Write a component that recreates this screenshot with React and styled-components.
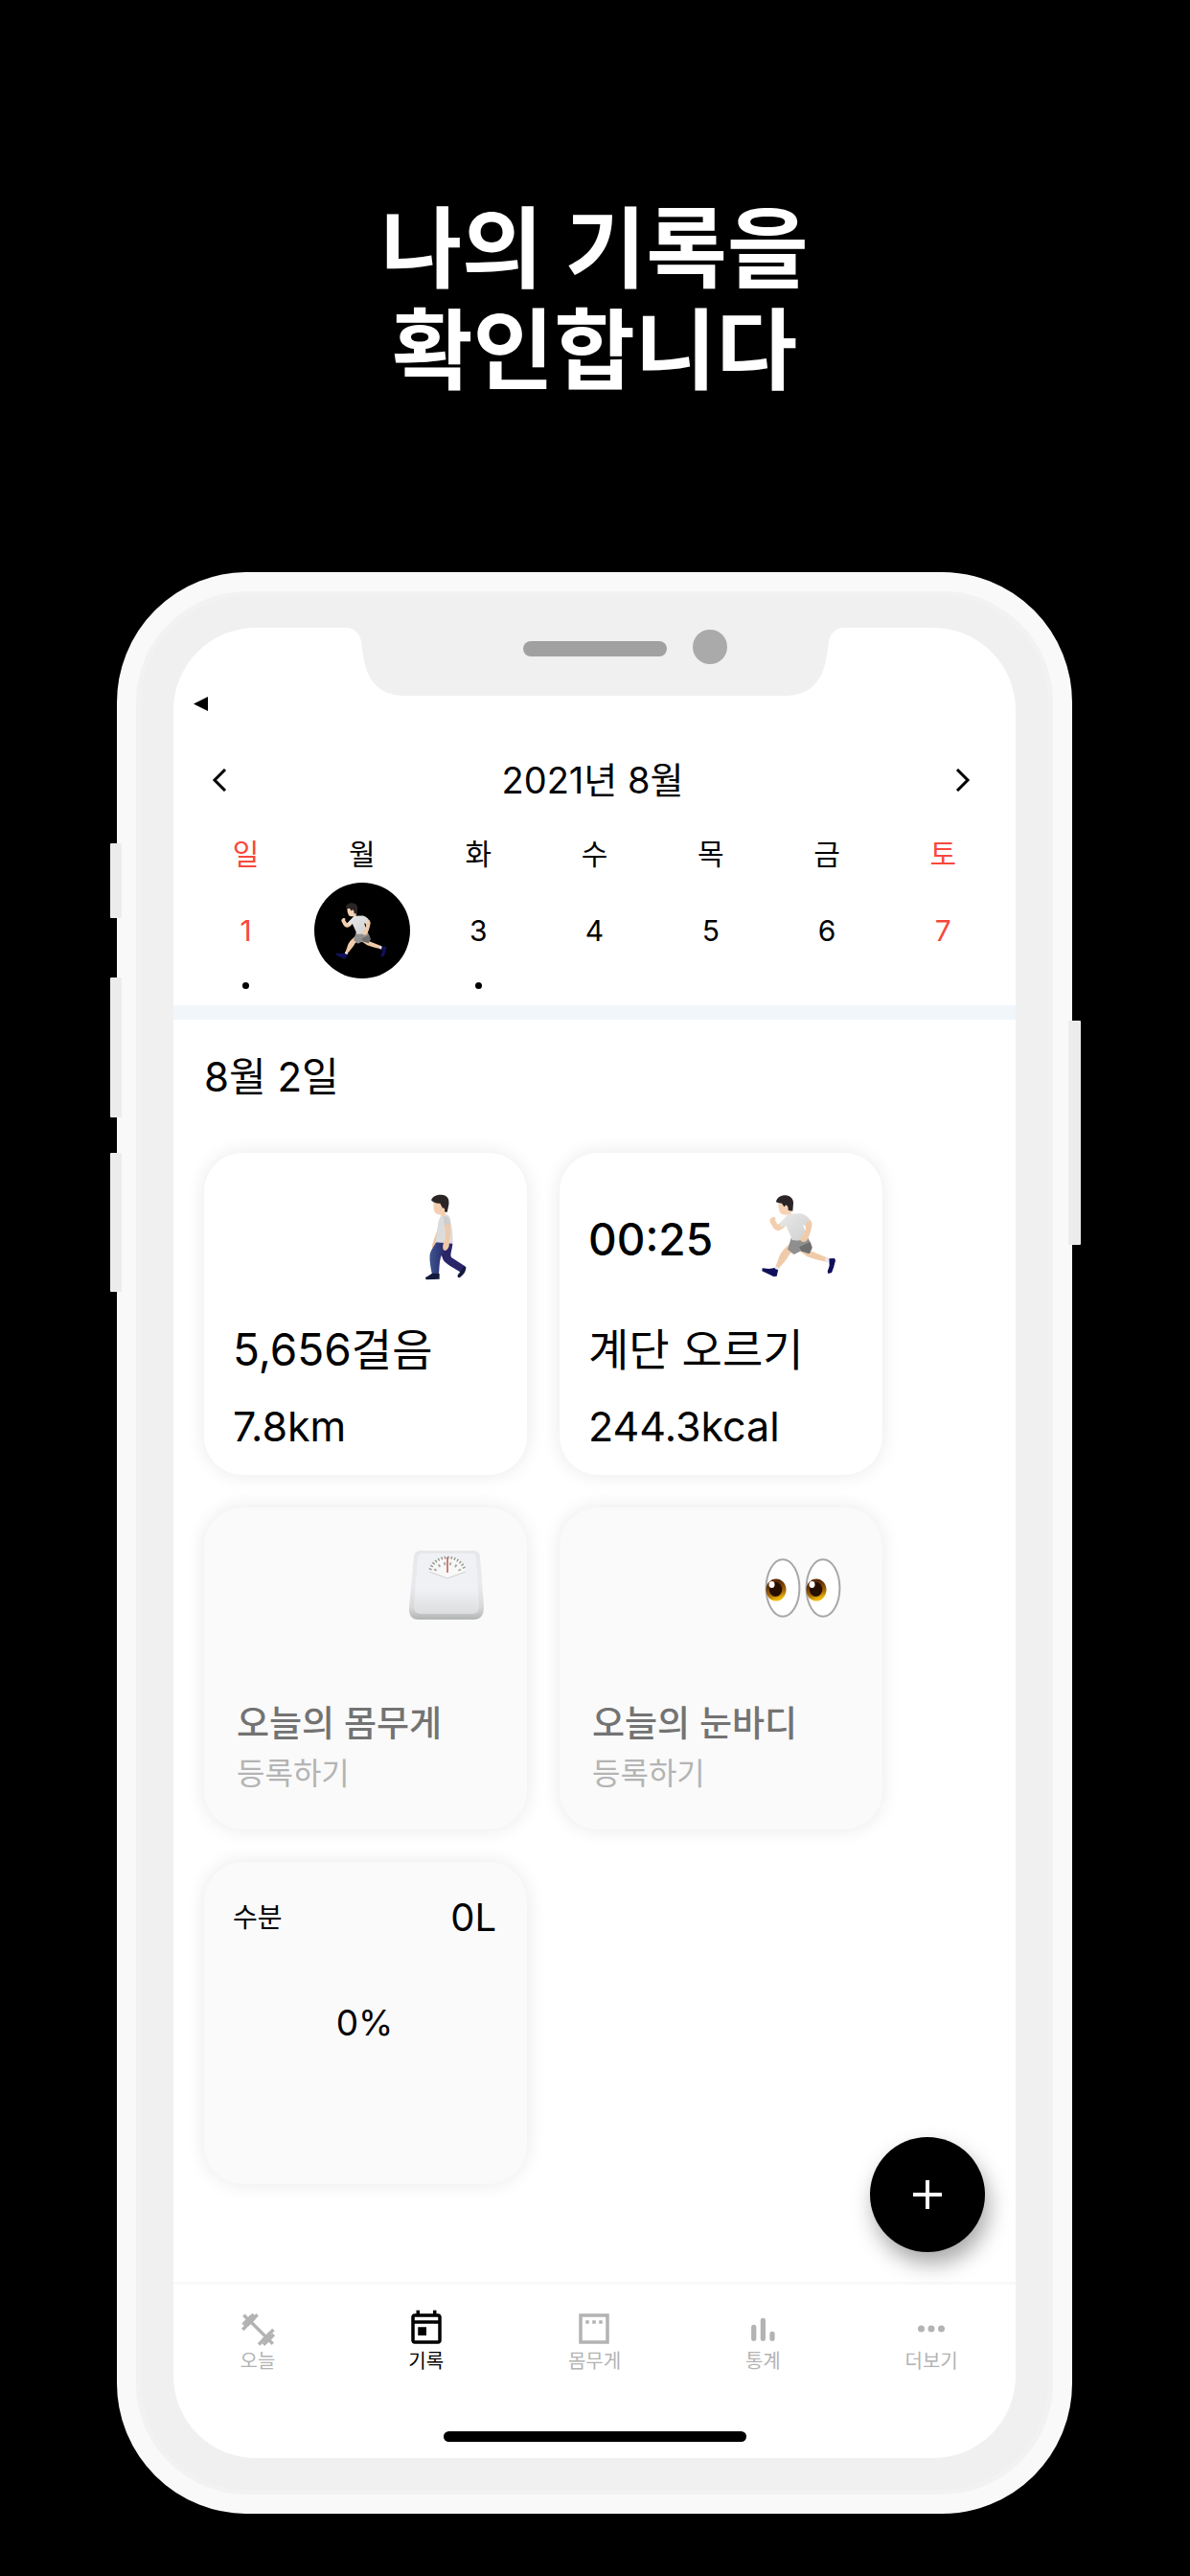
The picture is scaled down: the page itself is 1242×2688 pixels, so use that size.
import React from "react";
import styled, { createGlobalStyle, css } from "styled-components";

const GlobalStyle = createGlobalStyle`
  *, *::before, *::after { box-sizing: border-box; }
  body {
    margin: 0;
    background: #000;
    color: #000;
    font-family: Inter, "Noto Sans CJK KR", sans-serif;
    font-weight: 400;
  }
  h1, h2, p { margin: 0; font-weight: inherit; }
  button { font-family: inherit; font-weight: inherit; color: inherit; border: 0; padding: 0; cursor: pointer; }
  svg { display: block; }
`;

const Page = styled.div`
  min-height: 100vh;
  padding: 209px 123px 65px 122px;
  background: #000;
`;

const Headline = styled.h1`
  margin-bottom: 176px;
  color: #fff;
  font-family: Roboto, "Noto Sans CJK KR", sans-serif;
  font-size: 92px;
  font-weight: 700;
  line-height: 106px;
  text-align: center;
`;

const Phone = styled.div`
  position: relative;
  padding: 38px 39px;
  border: 20px solid #f9f9f9;
  border-radius: 136px;
  background: #f0f0f0;
  box-shadow: inset 0 0 0 5px #f2f2f2;
`;

const SideButton = styled.span`
  position: absolute;
  ${(p) => (p.$side === "left" ? "left: -27px;" : "right: -29px;")}
  top: ${(p) => p.$top}px;
  width: ${(p) => (p.$side === "left" ? 12 : 13)}px;
  height: ${(p) => p.$length}px;
  border-radius: 1px;
  background: #ececec;
`;

const Screen = styled.div`
  position: relative;
  overflow: hidden;
  border-radius: 86px;
  background: #fff;
`;

const Notch = styled.div`
  position: absolute;
  top: 0;
  left: 50%;
  width: 520px;
  transform: translateX(-50%);
`;

const StatusBar = styled.div`
  padding: 72px 21px 0;
`;

const MonthBar = styled.div`
  display: flex;
  align-items: center;
  justify-content: space-between;
  height: 72px;
  margin-top: 36px;
  padding: 0 28px 0 24px;
`;

const MonthTitle = styled.h2`
  font-size: 38px;
  line-height: 48px;
`;

const ArrowButton = styled.button`
  display: flex;
  align-items: center;
  justify-content: center;
  width: 48px;
  height: 48px;
  background: none;
`;

const WeekWrap = styled.div`
  padding: 21px 15px 17px;
  border-bottom: 15px solid #f1f6fb;
`;

const Week = styled.table`
  width: 100%;
  table-layout: fixed;
  border-collapse: collapse;
  text-align: center;
`;

const Weekday = styled.th`
  height: 40px;
  padding: 0;
  color: ${(p) => (p.$holiday ? "#f8483c" : "#000")};
  font-size: 30px;
  font-weight: inherit;
  line-height: 40px;
`;

const DayCell = styled.td`
  padding: 10px 0 0;
`;

const Day = styled.button`
  display: flex;
  align-items: center;
  justify-content: center;
  width: 100px;
  height: 100px;
  margin: 0 auto;
  border-radius: 50%;
  background: ${(p) => (p.$selected ? "#000" : "transparent")};
  color: ${(p) => (p.$holiday ? "#f8483c" : "#000")};
  font-size: 30px;
  line-height: 40px;
`;

const Dot = styled.span`
  display: block;
  width: 7px;
  height: 7px;
  margin: 4px auto 0;
  border-radius: 50%;
  background: ${(p) => (p.$on ? "#000" : "transparent")};
`;

const Records = styled.main`
  position: relative;
  padding: 30px 32px 102px;
`;

const DateTitle = styled.h2`
  margin-bottom: 49px;
  font-size: 42px;
  line-height: 60px;
`;

const CardGrid = styled.div`
  display: grid;
  grid-template-columns: repeat(auto-fill, 337px);
  grid-auto-rows: 336px;
  gap: 34px;
`;

const cardBase = css`
  border-radius: 40px;
  box-shadow: 0 0 20px rgba(0, 0, 0, 0.09);
`;

const ActivityCard = styled.article`
  ${cardBase}
  display: flex;
  flex-direction: column;
  padding: 38px 0 21px 30px;
  background: #fff;
`;

const CardTop = styled.div`
  display: flex;
  align-items: center;
  height: 104px;
  margin-bottom: auto;
  padding-right: 38px;
`;

const Emoji = styled.span`
  align-self: flex-start;
  width: ${(p) => p.$size}px;
  height: ${(p) => p.$size}px;
  margin-left: auto;
`;

const Timer = styled.span`
  font-size: 46px;
  font-weight: 500;
  line-height: 60px;
`;

const ActivityName = styled.p`
  margin-bottom: 20px;
  font-size: 46px;
  line-height: 60px;
`;

const ActivityValue = styled.p`
  font-size: 43px;
  line-height: 60px;
`;

const RegisterCard = styled.button`
  ${cardBase}
  display: flex;
  flex-direction: column;
  align-items: stretch;
  && { padding: 38px 0 32px 34px; }
  background: #fafafa;
  text-align: left;
`;

const RegisterTitle = styled.span`
  color: #737373;
  font-size: 37px;
  font-weight: 500;
  line-height: 52px;
`;

const RegisterHint = styled.span`
  color: #b4b4b4;
  font-size: 32px;
  line-height: 52px;
`;

const WaterCard = styled.article`
  ${cardBase}
  display: grid;
  grid-template-rows: 1fr 60px 1fr;
  padding: 34px 32px 34px 30px;
  background: #fafafa;
`;

const WaterHead = styled.div`
  display: flex;
  align-items: center;
  justify-content: space-between;
  height: 48px;
`;

const WaterLabel = styled.span`
  font-size: 28px;
  line-height: 48px;
`;

const WaterAmount = styled.span`
  font-size: 40px;
  line-height: 48px;
`;

const WaterPercent = styled.p`
  font-size: 37px;
  line-height: 60px;
  text-align: center;
`;

const AddButton = styled.button`
  position: absolute;
  right: 32px;
  bottom: 31px;
  display: flex;
  align-items: center;
  justify-content: center;
  width: 120px;
  height: 120px;
  border-radius: 50%;
  background: #000;
  box-shadow: 4px 12px 22px rgba(0, 0, 0, 0.34);
`;

const TabBar = styled.nav`
  display: grid;
  grid-template-columns: repeat(5, 1fr);
  padding-top: 25px;
  border-top: 3px solid #f9f9f9;
`;

const Tab = styled.a`
  display: flex;
  flex-direction: column;
  align-items: center;
  color: ${(p) => (p.$active ? "#000" : "#b3b3b3")};
  font-size: 20px;
  line-height: 26px;
  text-decoration: none;
`;

const HomeIndicator = styled.div`
  width: 316px;
  height: 11px;
  margin: 60px auto 17px;
  border-radius: 6px;
  background: #000;
`;

function RunnerIcon({ size }) {
  return (
    <svg width={size} height={size} viewBox="681 243 288 288" aria-hidden="true">
      <defs>
        <linearGradient id="runShirt" x1="0" x2="1" y1="0" y2="1">
          <stop offset="0" stopColor="#e9e9e9" />
          <stop offset="1" stopColor="#cfcfcf" />
        </linearGradient>
      </defs>
      <path d="M796 410 C777 428 762 440 757 462 L748 486 L758 491 C771 476 786 460 792 446 L816 430Z" fill="#f0cba9" />
      <path d="M838 422 L858 436 L913 458 L908 470 C884 467 864 460 848 454 L822 436Z" fill="#f0cba9" />
      <path d="M707 490 L728 492 L750 488 L757 493 L752 515 L742 516 L706 499Z" fill="#10105a" />
      <path d="M748 484 L761 489 L757 496 L746 492Z" fill="#e8e8ee" />
      <path d="M905 457 L916 460 L912 474 L903 467Z" fill="#e8e8ee" />
      <path d="M916 460 L933 459 L936 466 L930 488 L924 504 L913 507 L911 500 L917 482Z" fill="#10105a" />
      <path d="M797 396 L848 392 C856 406 864 418 862 430 L854 445 L828 436 L806 447 L786 431Z" fill="#8f8f8f" />
      <path d="M822 424 L856 408 L863 425 L854 445 L830 437Z" fill="#6e6e6e" />
      <path d="M773 338 C765 346 760 351 755 353 L747 340 C752 331 744 328 737 331 C729 336 728 343 735 352 C740 364 748 373 757 373 C768 369 776 363 780 356Z" fill="#f3cfae" />
      <path d="M788 320 L828 319 C845 324 857 336 858 344 L848 360 L834 353 C840 372 848 384 849 394 C836 404 815 405 800 402 C796 385 786 370 780 355 L765 364 L761 350Z" fill="url(#runShirt)" />
      <path d="M857 338 L863 351 C860 374 853 392 847 403 C838 411 827 408 825 399 L835 386 L843 367 L841 354Z" fill="#f0cba9" />
      <path d="M757 288 C757 300 759 315 768 321 L779 323 L796 321 L800 306 L794 282Z" fill="#f5d3b4" />
      <path d="M750 283 C752 269 764 262 779 262 C796 263 805 274 804 287 L802 311 L788 309 C789 301 786 295 782 292 L775 298 L768 287 C761 287 755 285 750 283Z" fill="#2b2625" />
    </svg>
  );
}

function WalkerIcon() {
  return (
    <svg width="96" height="96" viewBox="708 603 288 288" aria-hidden="true">
      <defs>
        <linearGradient id="jeans" x1="0" x2="1" y1="0" y2="0">
          <stop offset="0" stopColor="#3f5590" />
          <stop offset="1" stopColor="#211c60" />
        </linearGradient>
      </defs>
      <path d="M832 716 C828 742 815 763 812 786 L820 790 L834 758Z" fill="#edc6a4" />
      <path d="M838 768 L877 772 C877 790 868 806 873 816 L916 844 L902 863 C884 850 854 836 848 824 C841 808 838 792 838 780Z" fill="#2a2468" />
      <path d="M827 767 L866 770 C860 790 850 800 842 811 C835 828 836 850 834 869 L813 869 C808 846 804 826 806 806 C810 790 820 780 827 767Z" fill="url(#jeans)" />
      <path d="M813 866 L836 867 L836 884 L795 886 C790 882 792 877 798 876Z" fill="#141a3c" />
      <path d="M913 843 L919 846 C920 860 910 872 899 880 C893 880 891 876 894 870 L902 860Z" fill="#141a3c" />
      <path d="M845 682 C858 679 868 685 870 696 C875 720 878 744 878 773 L824 769 L831 714 C834 698 838 688 845 682Z" fill="#dcdcdc" />
      <path d="M853 712 L868 708 C873 730 870 750 866 766 C869 782 862 795 852 795 C846 792 845 782 849 770 L856 752Z" fill="#efc9a8" />
      <path d="M848 688 C858 684 868 690 870 710 L851 716Z" fill="#cecece" />
      <path d="M817 640 L858 638 L854 684 L842 688 L839 682 C828 684 820 678 818 664Z" fill="#f3cfb0" />
      <path d="M810 637 C816 622 834 618 848 621 C864 624 867 638 865 652 L860 675 L852 673 C854 662 850 660 846 662 L838 647 C828 648 816 645 810 637Z" fill="#2b2625" />
    </svg>
  );
}

function ScaleIcon() {
  return (
    <svg width="96" height="96" viewBox="0 0 96 96" aria-hidden="true">
      <defs>
        <linearGradient id="scaleBody" x1="0" x2="0" y1="0" y2="1">
          <stop offset="0" stopColor="#e6e7e8" />
          <stop offset="0.5" stopColor="#e9eaed" />
          <stop offset="0.82" stopColor="#d8d9da" />
          <stop offset="1" stopColor="#b2b4b4" />
        </linearGradient>
        <linearGradient id="scaleTop" x1="0" x2="0" y1="0" y2="1">
          <stop offset="0.6" stopColor="#f0f1f4" />
          <stop offset="1" stopColor="#dcddde" />
        </linearGradient>
      </defs>
      <path d="M23 7 H78 Q84 7 85 13 L89 66 Q89 79 78 79 H21 Q10 79 11 66 L16 13 Q17 7 23 7Z" fill="url(#scaleBody)" />
      <path d="M16 66 L20 14 Q21 10 25 10 H76 Q80 10 81 14 L84 66 Q84 73 77 73 H23 Q16 73 16 66Z" fill="url(#scaleTop)" />
      <path d="M32 29 C36 10 66 10 70 29 L51 36Z" fill="#f8f8f8" />
      <path d="M33 27 C38 10 64 10 69 27" fill="none" stroke="#96968c" strokeWidth="3" strokeDasharray="1.4 2" />
      <path d="M38 28 C42 18 60 18 64 28" fill="none" stroke="#aaaaa2" strokeWidth="3" strokeDasharray="2 4" />
      <path d="M32 29 L51 36 L70 29" fill="none" stroke="#d0d0ca" strokeWidth="1" />
      <path d="M51 14 V30" stroke="#c0463f" strokeWidth="1.4" />
    </svg>
  );
}

function EyesIcon() {
  return (
    <svg width="96" height="96" viewBox="0 0 96 96" aria-hidden="true">
      <defs>
        <linearGradient id="iris" x1="0" x2="0.3" y1="0" y2="1">
          <stop offset="0.3" stopColor="#5b2b08" />
          <stop offset="0.75" stopColor="#a86a08" />
          <stop offset="1" stopColor="#edb80a" />
        </linearGradient>
      </defs>
      {[0, 42].map((dx) => (
        <g key={dx} transform={`translate(${dx} 0)`}>
          <ellipse cx="30" cy="46" rx="17.4" ry="29.8" fill="#fff" stroke="#a8a8a8" strokeWidth="2" />
          <ellipse cx="23" cy="48" rx="10.5" ry="11.5" fill="url(#iris)" />
          <ellipse cx="22.5" cy="47.5" rx="6.8" ry="7.5" fill="#260f02" />
          <ellipse cx="18.5" cy="42.5" rx="3" ry="3.4" fill="#fff" />
        </g>
      ))}
    </svg>
  );
}

const tabs = [
  {
    label: "오늘",
    icon: (
      <g stroke="currentColor" fill="none">
        <path d="M7 7 L17.5 17.5" strokeWidth="2" />
        <path d="M3 12.6 L11.8 3.6 M3.2 9.6 L9.6 3.4 M3.6 3.8 L8 8.2 M12.6 21.4 L21.4 12.6 M15.4 21.6 L21.6 15.4 M16.5 16.5 L21 21" strokeWidth="2" />
        <path d="M5 9.2 L9.2 5 M15.8 19.6 L20 15.4" strokeWidth="4" />
      </g>
    ),
  },
  {
    label: "기록",
    active: true,
    icon: (
      <path
        fill="currentColor"
        d="M19 3h-1V1h-2v2H8V1H6v2H5c-1.1 0-2 .9-2 2v14c0 1.1.9 2 2 2h14c1.1 0 2-.9 2-2V5c0-1.1-.9-2-2-2zm0 16H5V9h14v10zm0-12H5V5h14v2zM7 11h5v5H7z"
      />
    ),
  },
  {
    label: "몸무게",
    icon: (
      <path
        fill="currentColor"
        d="M3 3h18v18H3zM5 5v14h14V5zM7 7h2v2H7zM11 7h2v2h-2zM15 7h2v2h-2z"
        fillRule="evenodd"
      />
    ),
  },
  {
    label: "통계",
    icon: (
      <path d="M6.7 11v6.8 M12.2 7v10.8 M17.7 15v2.8" stroke="currentColor" strokeWidth="3" strokeLinecap="round" />
    ),
  },
  {
    label: "더보기",
    icon: (
      <g fill="currentColor">
        <circle cx="6" cy="12" r="2" />
        <circle cx="12" cy="12" r="2" />
        <circle cx="18" cy="12" r="2" />
      </g>
    ),
  },
];

const days = [
  { name: "일", date: 1, holiday: true, dot: true },
  { name: "월", date: 2, selected: true },
  { name: "화", date: 3, dot: true },
  { name: "수", date: 4 },
  { name: "목", date: 5 },
  { name: "금", date: 6 },
  { name: "토", date: 7, holiday: true },
];

export default function App() {
  return (
    <Page>
      <GlobalStyle />
      <Headline>
        나의 기록을
        <br />
        확인합니다
      </Headline>
      <Phone>
        <SideButton $side="left" $top={263} $length={78} />
        <SideButton $side="left" $top={403} $length={146} />
        <SideButton $side="left" $top={586} $length={145} />
        <SideButton $side="right" $top={448} $length={234} />
        <Screen>
          <StatusBar>
            <svg width="15" height="15" viewBox="0 0 15 15" aria-hidden="true">
              <path d="M0 7.5 L15 0 V15Z" />
            </svg>
          </StatusBar>
          <Notch>
            <svg width="520" height="71" viewBox="0 0 520 71" aria-hidden="true">
              <path
                d="M0 0 C8 0 15 6 16 15 C19 34 20 71 62 71 H458 C500 71 501 34 504 15 C505 6 512 0 520 0Z"
                fill="#f0f0f0"
              />
              <rect x="185" y="14" width="150" height="16" rx="8" fill="#a1a1a1" />
              <circle cx="380" cy="20" r="18" fill="#aaa" />
            </svg>
          </Notch>

          <MonthBar>
            <ArrowButton type="button" aria-label="이전 주">
              <svg width="24" height="24" viewBox="0 0 24 24" fill="none" stroke="#000" strokeWidth="3">
                <path d="M18 1 L7 12 L18 23" />
              </svg>
            </ArrowButton>
            <MonthTitle>2021년 8월</MonthTitle>
            <ArrowButton type="button" aria-label="다음 주">
              <svg width="24" height="24" viewBox="0 0 24 24" fill="none" stroke="#000" strokeWidth="3">
                <path d="M3 1 L14 12 L3 23" />
              </svg>
            </ArrowButton>
          </MonthBar>

          <WeekWrap>
            <Week>
              <thead>
                <tr>
                  {days.map((d) => (
                    <Weekday key={d.name} scope="col" $holiday={d.holiday}>
                      {d.name}
                    </Weekday>
                  ))}
                </tr>
              </thead>
              <tbody>
                <tr>
                  {days.map((d) => (
                    <DayCell key={d.date}>
                      <Day
                        type="button"
                        $holiday={d.holiday}
                        $selected={d.selected}
                        aria-label={`${d.date}일`}
                      >
                        {d.selected ? <RunnerIcon size={66} /> : d.date}
                      </Day>
                      <Dot $on={d.dot} />
                    </DayCell>
                  ))}
                </tr>
              </tbody>
            </Week>
          </WeekWrap>

          <Records>
            <DateTitle>8월 2일</DateTitle>
            <CardGrid>
              <ActivityCard>
                <CardTop>
                  <Emoji $size={96}>
                    <WalkerIcon />
                  </Emoji>
                </CardTop>
                <ActivityName>5,656걸음</ActivityName>
                <ActivityValue>7.8km</ActivityValue>
              </ActivityCard>
              <ActivityCard>
                <CardTop>
                  <Timer>00:25</Timer>
                  <Emoji $size={96}>
                    <RunnerIcon size={96} />
                  </Emoji>
                </CardTop>
                <ActivityName>계단 오르기</ActivityName>
                <ActivityValue>244.3kcal</ActivityValue>
              </ActivityCard>
              <RegisterCard type="button">
                <CardTop as="span">
                  <Emoji $size={96}>
                    <ScaleIcon />
                  </Emoji>
                </CardTop>
                <RegisterTitle>오늘의 몸무게</RegisterTitle>
                <RegisterHint>등록하기</RegisterHint>
              </RegisterCard>
              <RegisterCard type="button">
                <CardTop as="span">
                  <Emoji $size={96}>
                    <EyesIcon />
                  </Emoji>
                </CardTop>
                <RegisterTitle>오늘의 눈바디</RegisterTitle>
                <RegisterHint>등록하기</RegisterHint>
              </RegisterCard>
              <WaterCard>
                <WaterHead>
                  <WaterLabel>수분</WaterLabel>
                  <WaterAmount>0L</WaterAmount>
                </WaterHead>
                <WaterPercent>0%</WaterPercent>
              </WaterCard>
            </CardGrid>
            <AddButton type="button" aria-label="기록 추가">
              <svg width="30" height="30" viewBox="0 0 30 30" stroke="#fff" strokeWidth="4">
                <path d="M15 0 V30 M0 15 H30" />
              </svg>
            </AddButton>
          </Records>

          <TabBar>
            {tabs.map((t) => (
              <Tab key={t.label} href="#" $active={t.active} aria-current={t.active ? "page" : undefined}>
                <svg width="42" height="42" viewBox="0 0 24 24" aria-hidden="true">
                  {t.icon}
                </svg>
                {t.label}
              </Tab>
            ))}
          </TabBar>
          <HomeIndicator />
        </Screen>
      </Phone>
    </Page>
  );
}
